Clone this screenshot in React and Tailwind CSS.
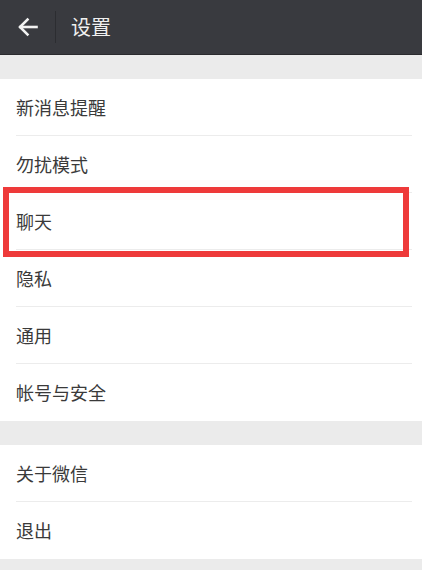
import { Fragment } from "react";

const sections = [
  ["新消息提醒", "勿扰模式", "聊天", "隐私", "通用", "帐号与安全"],
  ["关于微信", "退出"],
];

function Row({ label, last, highlight }) {
  return (
    <div className="relative h-[57px] bg-white">
      <div className="flex h-full items-center px-4 text-[18px] text-[#3a3a3a]">
        {label}
      </div>
      {!last && <div className="absolute bottom-0 left-4 right-[10px] h-px bg-[#ececec]" />}
      {highlight && (
        <div className="absolute left-[3px] right-[13px] top-[-6px] bottom-[-7px] z-10 border-[6px] border-[#ee3a3a]" />
      )}
    </div>
  );
}

export default function App() {
  return (
    <div
      className="flex h-[570px] w-[422px] flex-col overflow-hidden bg-[#ebebeb]"
      style={{ fontFamily: '"Noto Sans CJK SC", "Noto Sans", sans-serif' }}
    >
      {/* header */}
      <div className="flex h-[55px] shrink-0 items-center border-b border-[#2a2a2e] bg-[#393a3f]">
        <div className="flex w-[55px] justify-center">
          <svg width="22" height="20" viewBox="0 0 22 20" fill="none" stroke="#f2f2f2" strokeWidth="2.6" strokeLinecap="square">
            <path d="M19.5 10H3.5" />
            <path d="M10.5 2.5L3 10l7.5 7.5" />
          </svg>
        </div>
        <div className="h-[32px] w-px bg-[#2c2d31]" />
        <div className="ml-[15px] text-[20px] text-[#f0f0f0]">设置</div>
      </div>

      {sections.map((items, si) => (
        <Fragment key={si}>
          <div className="h-6 shrink-0" />
          <div className="shrink-0">
            {items.map((label, i) => (
              <Row
                key={label}
                label={label}
                last={i === items.length - 1}
                highlight={label === "聊天"}
              />
            ))}
          </div>
        </Fragment>
      ))}
    </div>
  );
}
